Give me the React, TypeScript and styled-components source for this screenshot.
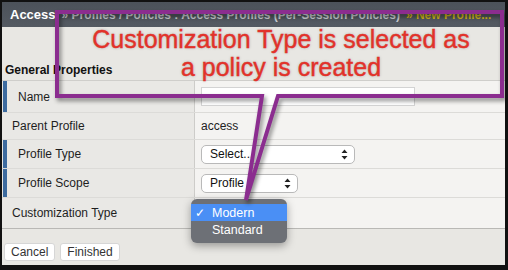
import styled, { createGlobalStyle } from "styled-components";

const Global = createGlobalStyle`
  html, body { margin: 0; padding: 0; background: #0d0d0d; }
  * { box-sizing: border-box; }
`;

const Frame = styled.div`
  position: relative;
  width: 508px;
  height: 270px;
  border-style: solid;
  border-color: #111;
  border-width: 2px 3px 5px 2px;
  background: #e8e7e3;
  font-family: "Liberation Sans", Arial, sans-serif;
  overflow: hidden;
`;

const Header = styled.div`
  height: 25px;
  display: flex;
  align-items: center;
  gap: 6px;
  padding-left: 8px;
  background: linear-gradient(#4c525a, #545a62);
  font-size: 12px;
  font-weight: bold;
  white-space: nowrap;
`;

const Crumb = styled.span<{ $tone: "main" | "path" | "new" }>`
  color: ${(p) =>
    p.$tone === "main" ? "#ffffff" : p.$tone === "new" ? "#d2b21a" : "#c9ccd1"};
  font-size: ${(p) => (p.$tone === "main" ? "13px" : "12px")};
`;

const Body = styled.div`
  padding-top: 36px;
`;

const Section = styled.div`
  padding: 0 0 4px 3px;
  height: 17px;
  font-size: 12px;
  font-weight: bold;
  color: #111;
`;

const Table = styled.div`
  border-top: 1px solid #cfcecb;
  border-bottom: 1px solid #b9b8b5;
`;

const Row = styled.div<{ $h: number }>`
  display: grid;
  grid-template-columns: 193px 1fr;
  height: ${(p) => p.$h}px;
  border-bottom: 1px solid #dcdbd8;
  &:last-child { border-bottom: 0; }
`;

const Label = styled.div<{ $req?: boolean }>`
  display: flex;
  align-items: center;
  padding-left: ${(p) => (p.$req ? "11px" : "10px")};
  background: #e9e8e5;
  border-left: ${(p) => (p.$req ? "4px solid #3d6b9f" : "0")};
  margin-left: ${(p) => (p.$req ? "1px" : "0")};
  border-right: 1px solid #cdccc9;
  font-size: 12px;
  color: #1e1e1e;
`;

const Value = styled.div`
  display: flex;
  align-items: center;
  padding-left: 6px;
  background: #f4f3f1;
  font-size: 12px;
  color: #222;
`;

const TextInput = styled.div`
  width: 214px;
  height: 19px;
  background: #fff;
  border: 1px solid #d3d3d3;
`;

const Select = styled.div<{ $w: number }>`
  display: flex;
  align-items: center;
  justify-content: space-between;
  width: ${(p) => p.$w}px;
  height: 19px;
  padding: 0 6px 0 8px;
  background: #fff;
  border: 1px solid #b9b9b9;
  border-radius: 5px;
  font-size: 12px;
  color: #111;
`;

const Buttons = styled.div`
  display: flex;
  gap: 5px;
  padding: 14px 0 0 2px;
`;

const Button = styled.div`
  height: 18px;
  padding: 0 6px;
  display: flex;
  align-items: center;
  background: #fff;
  border: 1px solid #d6d6d6;
  border-radius: 3px;
  font-size: 12px;
  color: #333;
`;

const Callout = styled.svg`
  position: absolute;
  left: -2px;
  top: -2px;
  width: 508px;
  height: 270px;
  pointer-events: none;
  filter: drop-shadow(2px 3px 2px rgba(0, 0, 0, 0.45));
`;

const CalloutText = styled.div`
  position: absolute;
  left: 56px;
  top: 23px;
  width: 446px;
  text-align: center;
  font-size: 25px;
  line-height: 28px;
  color: #e2322a;
  -webkit-text-stroke: 0.4px #e2322a;
  text-shadow: 0 0 3px rgba(0, 0, 0, 0.25);
`;

const Menu = styled.div`
  position: absolute;
  left: 189px;
  top: 197px;
  width: 96px;
  padding: 5px 0;
  background: #6d7076;
  border-radius: 6px;
  box-shadow: 0 3px 8px rgba(0, 0, 0, 0.35);
`;

const MenuItem = styled.div<{ $active?: boolean }>`
  display: flex;
  align-items: center;
  height: 17px;
  padding-left: 4px;
  gap: 5px;
  background: ${(p) => (p.$active ? "#4a8ff5" : "transparent")};
  color: #fff;
  font-size: 12.5px;
`;

const Check = styled.span`
  width: 12px;
  font-size: 12px;
`;

const Arrows = () => (
  <svg width="7" height="11" viewBox="0 0 7 11">
    <path d="M3.5 0.5 L6.5 4 H0.5 Z M3.5 10.5 L6.5 7 H0.5 Z" fill="#222" />
  </svg>
);

export default function App() {
  return (
    <>
      <Global />
      <Frame>
        <Header>
          <Crumb $tone="main">Access</Crumb>
          <Crumb $tone="path">» Profiles / Policies : Access Profiles (Per-Session Policies)</Crumb>
          <Crumb $tone="new">» New Profile...</Crumb>
        </Header>
        <Body>
          <Section>General Properties</Section>
          <Table>
            <Row $h={32}>
              <Label $req>Name</Label>
              <Value>
                <TextInput />
              </Value>
            </Row>
            <Row $h={27}>
              <Label>Parent Profile</Label>
              <Value>access</Value>
            </Row>
            <Row $h={29}>
              <Label $req>Profile Type</Label>
              <Value>
                <Select $w={154}>
                  Select...
                  <Arrows />
                </Select>
              </Value>
            </Row>
            <Row $h={29}>
              <Label $req>Profile Scope</Label>
              <Value>
                <Select $w={97}>
                  Profile
                  <Arrows />
                </Select>
              </Value>
            </Row>
            <Row $h={30}>
              <Label>Customization Type</Label>
              <Value />
            </Row>
          </Table>
          <Buttons>
            <Button>Cancel</Button>
            <Button>Finished</Button>
          </Buttons>
        </Body>
        <Menu>
          <MenuItem $active>
            <Check>✓</Check>Modern
          </MenuItem>
          <MenuItem>
            <Check />Standard
          </MenuItem>
        </Menu>
        <Callout viewBox="0 0 508 270">
          <path
            d="M57 12 H502 V96 H278 L246 200 L262 96 H57 Z"
            fill="none"
            stroke="#8b2d8f"
            strokeWidth="4"
            strokeLinejoin="miter"
          />
        </Callout>
        <CalloutText>
          Customization Type is selected as
          <br />a policy is created
        </CalloutText>
      </Frame>
    </>
  );
}
